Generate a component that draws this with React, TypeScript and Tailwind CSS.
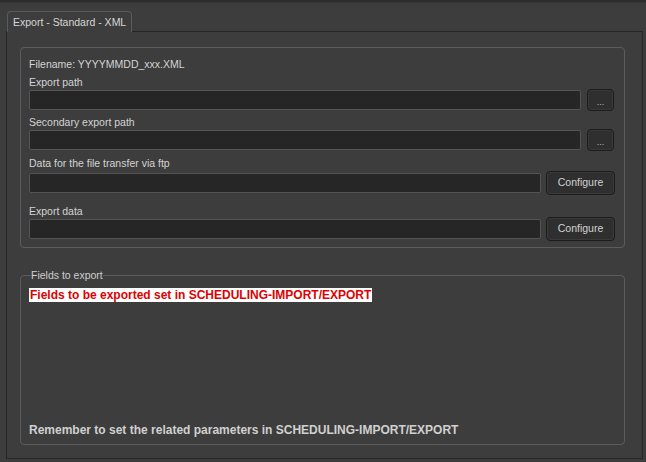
import React from 'react';

function PathRow({ label, mt }: { label: string; mt: string }) {
  return (
    <>
      <div className={`${mt} h-[14px] leading-[16px]`}>{label}</div>
      <div className="mt-[1px] flex items-center gap-[6px] pr-[10px]">
        <div className="flex-1 h-[20px] bg-[#262626] border border-[#545454] rounded-[2px]" />
        <button className="w-[27px] h-[22px] bg-[#2f2f2f] border border-[#1c1c1c] rounded-[4px] shadow-[inset_0_0_0_1px_#3a3a3a] text-[#bdbdbd] text-[9px] leading-none pt-[4px]">
          ...
        </button>
      </div>
    </>
  );
}

function ConfigRow({ label, mt, rowMt }: { label: string; mt: string; rowMt: string }) {
  return (
    <>
      <div className={`${mt} h-[14px] leading-[16px]`}>{label}</div>
      <div className={`${rowMt} flex items-center gap-[5px] pr-[9px]`}>
        <div className="flex-1 h-[20px] bg-[#262626] border border-[#545454] rounded-[2px]" />
        <button className="w-[69px] h-[24px] bg-[#2f2f2f] border border-[#1c1c1c] rounded-[4px] shadow-[inset_0_0_0_1px_#3a3a3a] text-[#d2d2d2] text-[10.5px]">
          Configure
        </button>
      </div>
    </>
  );
}

export default function App() {
  return (
    <div className="w-[646px] h-[462px] bg-[#3d3d3d] flex flex-col overflow-hidden font-['Liberation_Sans',Arial,sans-serif] text-[10.5px] text-[#d4d4d4]">
      <div className="h-[3px] bg-[#2c2c2c] border-b border-[#353535]" />
      <div className="flex-1 flex flex-col pt-[8px] pl-[6px] pr-[3px] pb-[3px]">
        <div className="flex pl-[1px]">
          <div className="h-[21px] px-[5px] pt-[4px] whitespace-nowrap border border-b-0 border-[#5a5a5a] rounded-t-[4px] bg-[#3d3d3d] text-[10.5px] leading-[13px] text-[#d6d6d6] relative z-10 -mb-px">
            Export - Standard - XML
          </div>
        </div>
        <div className="flex-1 border border-[#262626] border-t-[#242424] pl-[13px] pr-[17px] pt-[15px] flex flex-col">
          <div className="h-[201px] border border-[#5c5c5c] rounded-[4px] pl-[8px] flex flex-col pt-[8px]">
            <div className="h-[14px] leading-[16px]">Filename: YYYYMMDD_xxx.XML</div>
            <PathRow label="Export path" mt="mt-[4px]" />
            <PathRow label="Secondary export path" mt="mt-[3px]" />
            <ConfigRow label="Data for the file transfer via ftp" mt="mt-[4px]" rowMt="mt-[2px]" />
            <ConfigRow label="Export data" mt="mt-[8px]" rowMt="mt-0" />
          </div>
          <fieldset className="mt-[21px] h-[176px] border border-[#5c5c5c] rounded-[4px] pl-[8px] pr-[8px]">
            <legend className="ml-[2px] text-[#cfcfcf] text-[10.5px] leading-[12px]">Fields to export</legend>
            <div className="h-[156px] flex flex-col">
              <div className="mt-[7px] self-start bg-white text-[#e00000] font-bold text-[12px] leading-[14px] px-[1px]">
                Fields to be exported set in SCHEDULING-IMPORT/EXPORT
              </div>
              <div className="mt-auto font-bold text-[12px] leading-[14px] text-[#d0d0d0]">
                Remember to set the related parameters in SCHEDULING-IMPORT/EXPORT
              </div>
            </div>
          </fieldset>
        </div>
      </div>
    </div>
  );
}
